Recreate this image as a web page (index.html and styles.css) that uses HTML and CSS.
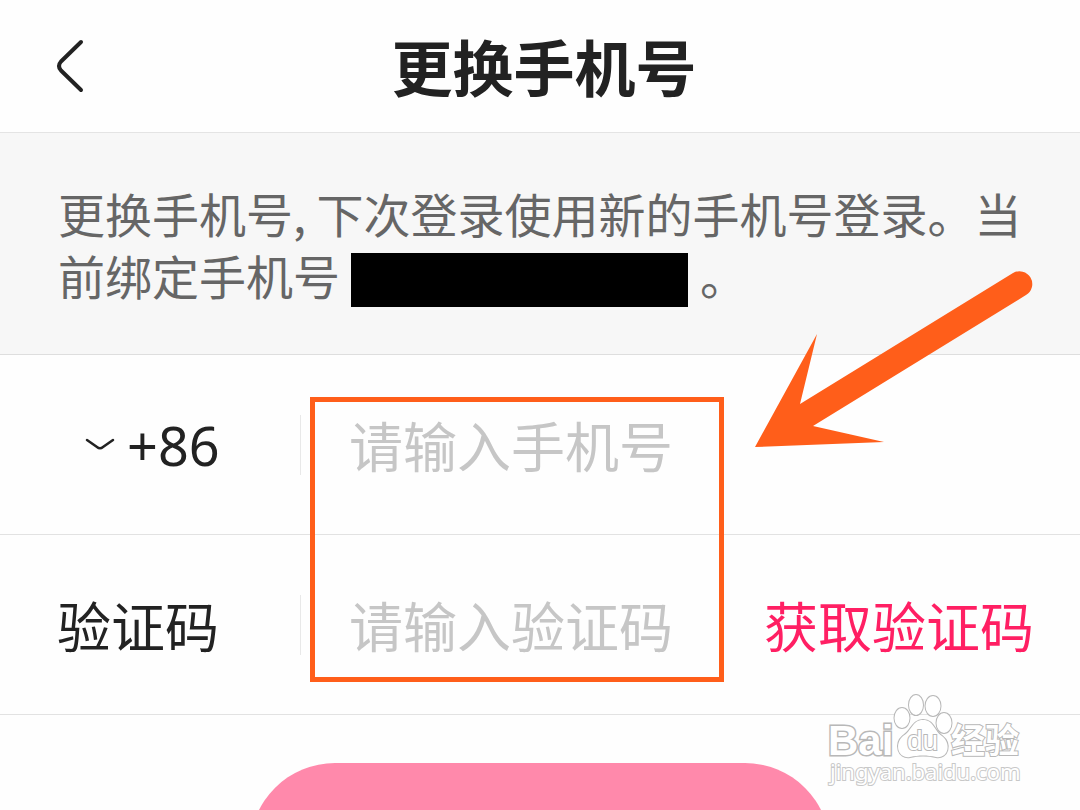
FILE: index.html
```html
<!DOCTYPE html>
<html lang="zh-CN">
<head>
    <meta charset="UTF-8">
    <meta name="viewport" content="width=device-width, initial-scale=1.0">
    <title>更换手机号</title>
    <link rel="stylesheet" href="styles.css">
</head>
<body>
    <div class="page">
        <header class="header">
            <button type="button" class="back-btn" aria-label="返回">
                <svg width="32" height="56" viewBox="0 0 32 56" fill="none" stroke="#222" stroke-width="4" stroke-linecap="round" stroke-linejoin="round">
                    <path d="M27 4 L7 23.500 Q3 28 7 32.500 L27 52"/>
                </svg>
            </button>
            <h1 class="title">更换手机号</h1>
        </header>

        <p class="notice">更换手机号, 下次登录使用新的手机号登录。当前绑定手机号<span class="masked"></span>。</p>

        <form class="form">
            <div class="row">
                <div class="row-label area">
                    <svg class="chevron" width="30" height="14" viewBox="0 0 30 14" fill="none" stroke="#222" stroke-width="2.500" stroke-linecap="round">
                        <path d="M2 2 L12 9 Q15 11.500 18 9 L28 2"/>
                    </svg>
                    <select class="area-select" aria-label="国家区号">
                        <option>+86</option>
                    </select>
                </div>
                <input class="field" type="tel" placeholder="请输入手机号" aria-label="手机号">
            </div>
            <div class="row">
                <label class="row-label" for="code">验证码</label>
                <input class="field" id="code" type="text" placeholder="请输入验证码">
                <button type="button" class="code-btn">获取验证码</button>
            </div>

            <!-- 标注 -->
            <div class="mark-box"></div>
            <svg class="mark-arrow" width="280" height="178" viewBox="0 0 280 178" fill="#ff5e1a">
                <path d="M0 177 L62 64 L45 134 L258 3 A12 12 0 0 1 271 25 L58 156 L129 172 Z"/>
            </svg>
        </form>

        <button type="button" class="submit-btn" aria-label="提交"></button>

        <!-- 水印 -->
        <svg class="watermark" width="200" height="96" viewBox="0 0 200 96">
            <g class="wm-outline">
                <text class="wm-bai" x="4" y="61">Bai</text>
                <path d="M99 26 C110 26 110 37 118 42 C128 50 124 65 112 63 C103 61 95 61 86 63 C74 65 70 50 79 42 C88 37 88 26 99 26 Z"/>
                <ellipse cx="78" cy="24" rx="7.500" ry="10"/>
                <ellipse cx="92" cy="11" rx="7" ry="10"/>
                <ellipse cx="109" cy="12" rx="7.500" ry="10"/>
                <ellipse cx="120" cy="29" rx="7.500" ry="10"/>
                <text class="wm-du" x="83" y="56">du</text>
                <text class="wm-cn" x="127" y="59">经验</text>
                <text class="wm-url" x="6" y="86">jingyan.baidu.com</text>
            </g>
        </svg>
    </div>
</body>
</html>
```
FILE: styles.css
```css
* {
    margin: 0;
    padding: 0;
    box-sizing: border-box;
}

body {
    font-family: "Noto Sans CJK SC", sans-serif;
    background: #fefefe;
    color: #222;
}

button,
input,
select {
    font-family: inherit;
    color: inherit;
    background: none;
    border: none;
    outline: none;
}

.page {
    position: relative;
    height: 100vh;
    overflow: hidden;
}

.header {
    display: grid;
    grid-template-columns: 1fr auto 1fr;
    align-items: center;
    height: 133px;
    padding: 0 46px 0 54px;
    border-bottom: 1px solid #e4e4e4;
}

.back-btn {
    justify-self: start;
    height: 56px;
    cursor: pointer;
}

.title {
    font-size: 61px;
    line-height: 80px;
    font-weight: 700;
}

.notice {
    padding: 49px 57px 43px 58px;
    background: #f7f7f7;
    border-bottom: 1px solid #dedede;
    color: #666;
    font-size: 47px;
    line-height: 62px;
}

.masked {
    display: inline-block;
    width: 337px;
    height: 54px;
    margin: 0 12px 4px 11px;
    background: #000;
    vertical-align: middle;
}

.form {
    position: relative;
}

.row {
    display: flex;
    align-items: center;
    height: 180px;
    padding-right: 46px;
    border-bottom: 1px solid #e2e2e2;
    font-size: 54px;
    line-height: 60px;
}

.row-label {
    flex: 0 0 300px;
    padding-left: 57px;
}

.area {
    display: flex;
    align-items: center;
    gap: 12px;
    padding-left: 85px;
}

.area-select {
    appearance: none;
    font-family: "Noto Sans", "Noto Sans CJK SC", sans-serif;
    font-size: 54px;
    height: 60px;
    line-height: 60px;
}

.field {
    flex: 1;
    min-width: 0;
    height: 60px;
    padding-left: 48px;
    border-left: 1px solid #e8e8e8;
    font-size: 54px;
}

.field::placeholder {
    color: #c6c6c6;
}

.code-btn {
    color: #ff1f63;
    font-size: 54px;
    line-height: 60px;
    cursor: pointer;
}

.submit-btn {
    display: block;
    width: 580px;
    max-width: 90%;
    height: 170px;
    margin: 48px auto 0;
    border-radius: 85px;
    background: #ff89ab;
}

.mark-box {
    position: absolute;
    top: 42px;
    left: 310px;
    width: 414px;
    height: 285px;
    border: 5px solid #ff5e1a;
    pointer-events: none;
}

.mark-arrow {
    position: absolute;
    top: -85px;
    left: 755px;
    pointer-events: none;
}

.watermark {
    position: absolute;
    right: 56px;
    bottom: 20px;
}

.wm-outline {
    fill: #fff;
    stroke: #b8b8b8;
    stroke-width: 2px;
    paint-order: stroke;
}

.wm-bai {
    font: 700 42px "Liberation Sans", sans-serif;
    stroke-width: 3px;
}

.wm-du {
    font: 400 28px "Liberation Sans", sans-serif;
}

.wm-cn {
    font: 700 34px "Noto Sans CJK SC", sans-serif;
}

.wm-url {
    font: 400 22px "Noto Sans", sans-serif;
    stroke: #c8c8c8;
}
```
